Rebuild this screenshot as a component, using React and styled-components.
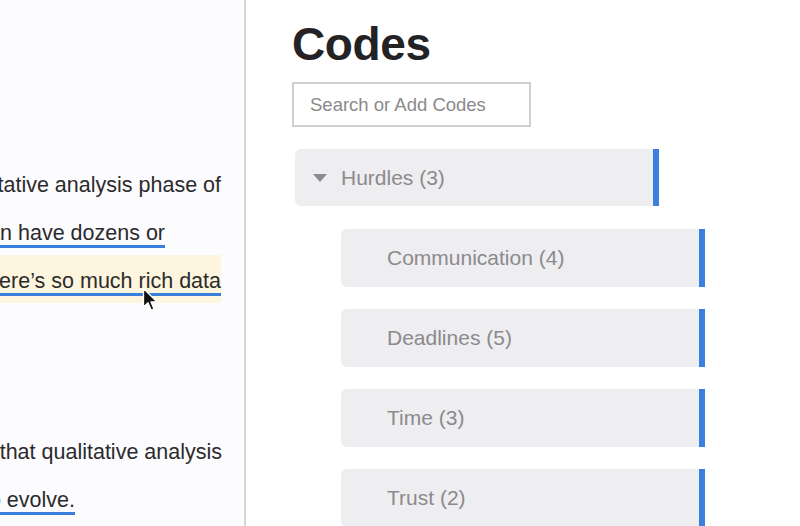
import React from "react";
import styled, { createGlobalStyle } from "styled-components";

const GlobalStyle = createGlobalStyle`
  html, body {
    margin: 0;
    padding: 0;
    background: #ffffff;
    font-family: "Liberation Sans", Arial, sans-serif;
  }
`;

const Page = styled.div`
  display: flex;
  width: 800px;
  height: 526px;
  overflow: hidden;
`;

const Document = styled.div`
  position: relative;
  flex: 0 0 246px;
  height: 100%;
  overflow: hidden;
  background: #fcfbfd;
  border-right: 2px solid #d6d5d8;
  padding-top: 159px;
  box-sizing: border-box;
`;

const Paragraph = styled.div`
  & + & {
    margin-top: 123px;
  }
`;

const Line = styled.div`
  display: flex;
  justify-content: flex-end;
  height: 48px;
  padding-right: ${(p) => 244 - p.$end}px;
  font-size: 21.5px;
  color: #2b2b2d;
  white-space: nowrap;
`;

const Quote = styled.span`
  display: block;
  flex: none;
  padding-top: 5px;
  line-height: 43px;
  background: ${(p) => (p.$highlight ? "#fdf5dd" : "transparent")};
  text-decoration: ${(p) => (p.$coded ? "underline" : "none")};
  text-decoration-color: #3b7fdc;
  text-decoration-thickness: 3px;
  text-underline-offset: 5px;
`;

const Pointer = styled.svg`
  position: absolute;
  left: 142px;
  top: 287px;
`;

const CodesPanel = styled.div`
  flex: 1;
  padding: 21px 0 0 47px;
`;

const Title = styled.h1`
  margin: 0 0 15px -1px;
  font-size: 46px;
  line-height: 46px;
  font-weight: 700;
  letter-spacing: -0.4px;
  color: #232325;
`;

const Search = styled.input`
  display: block;
  width: 239px;
  height: 45px;
  box-sizing: border-box;
  margin-left: -1px;
  padding: 0 0 0 16px;
  border: 2px solid #cfcfd1;
  font-family: inherit;
  font-size: 18.5px;
  color: #333;
  outline: none;
  &::placeholder {
    color: #8a8a8c;
  }
`;

const CodeList = styled.div`
  display: flex;
  flex-direction: column;
  gap: 22px;
  margin-top: 22px;
`;

const Code = styled.div`
  display: flex;
  align-items: center;
  width: 364px;
  height: ${(p) => (p.$parent ? 57 : 58)}px;
  box-sizing: border-box;
  margin-left: ${(p) => (p.$parent ? 2 : 48)}px;
  padding-left: ${(p) => (p.$parent ? 18 : 46)}px;
  background: #eeedef;
  border-radius: 6px 0 0 6px;
  border-right: 6px solid #3b80de;
  font-size: 21px;
  color: #8b8a8d;
  &:first-child {
    margin-bottom: 1px;
  }
`;

const Caret = styled.span`
  width: 0;
  height: 0;
  margin-right: 14px;
  border-left: 7px solid transparent;
  border-right: 7px solid transparent;
  border-top: 8px solid #8b8a8d;
`;

const paragraphs = [
  [
    { text: "During the qualitative analysis phase of", end: 221 },
    { text: "a research project, you can have dozens or", end: 165, coded: true },
    { text: "hundreds of codes. There’s so much rich data", end: 221, coded: true, highlight: true },
  ],
  [
    { text: "We have found that qualitative analysis", end: 222 },
    { text: "and our process continues to evolve.", end: 75, coded: true },
  ],
];

const children = ["Communication (4)", "Deadlines (5)", "Time (3)", "Trust (2)"];

const App = () => (
  <>
    <GlobalStyle />
    <Page>
      <Document>
        {paragraphs.map((lines, i) => (
          <Paragraph key={i}>
            {lines.map((line) => (
              <Line key={line.text} $end={line.end}>
                <Quote $coded={line.coded} $highlight={line.highlight}>
                  {line.text}
                </Quote>
              </Line>
            ))}
          </Paragraph>
        ))}
        <Pointer width="17" height="26" viewBox="0 0 17 26">
          <path
            d="M1.5 1.5 L1.5 20 L6 15.8 L9.2 23.2 L12 22 L8.9 14.8 L14.8 14.8 Z"
            fill="#111"
            stroke="#fff"
            strokeWidth="1.3"
            strokeLinejoin="round"
          />
        </Pointer>
      </Document>
      <CodesPanel>
        <Title>Codes</Title>
        <Search placeholder="Search or Add Codes" />
        <CodeList>
          <Code $parent>
            <Caret />
            Hurdles (3)
          </Code>
          {children.map((name) => (
            <Code key={name}>{name}</Code>
          ))}
        </CodeList>
      </CodesPanel>
    </Page>
  </>
);

export default App;
